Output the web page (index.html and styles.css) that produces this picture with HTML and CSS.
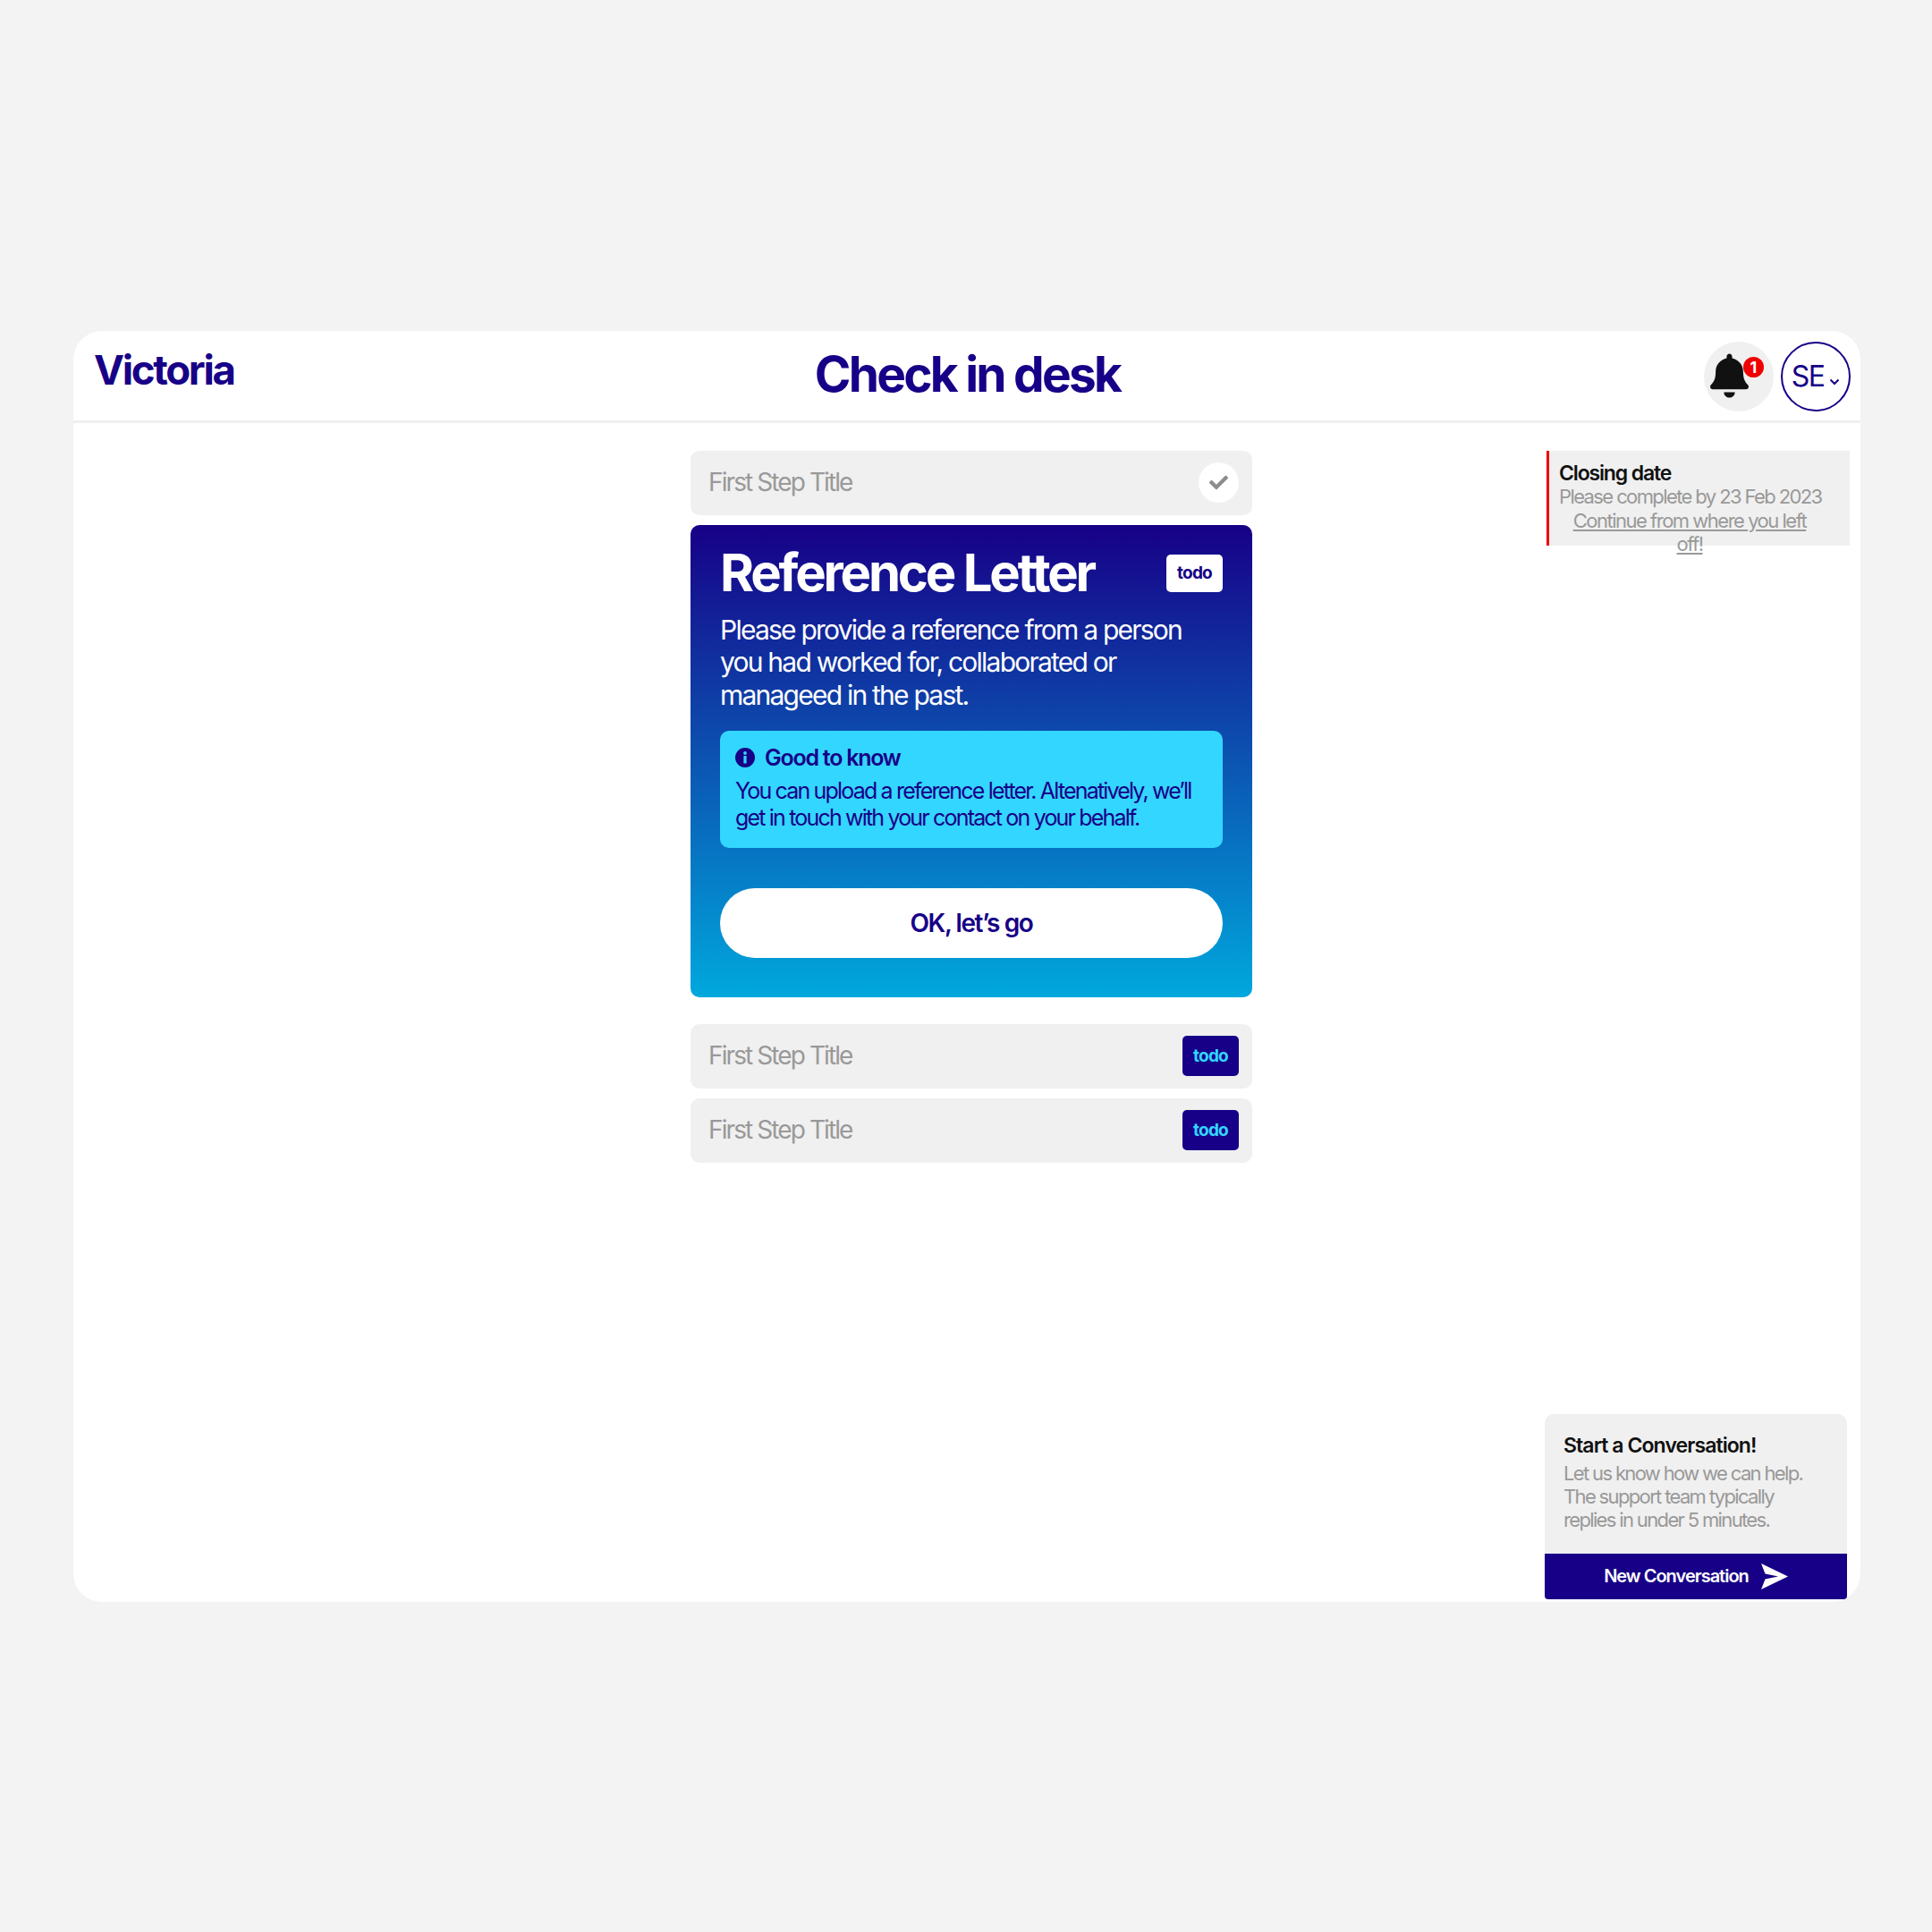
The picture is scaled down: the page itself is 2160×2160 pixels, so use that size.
FILE: index.html
```html
<!DOCTYPE html>
<html lang="en">
<head>
    <meta charset="UTF-8">
    <meta name="viewport" content="width=device-width, initial-scale=1.0">
    <title>Check in desk</title>
    <link rel="stylesheet" href="styles.css">
</head>
<body>

<div class="app-card">
    <header class="top-bar">
        <div class="logo">Victoria</div>
        <h1 class="page-title">Check in desk</h1>
        <div class="top-actions">
            <button class="bell-button" aria-label="Notifications">
                <svg class="bell-icon" viewBox="0 0 448 512"><path d="M224 512c35.32 0 63.97-28.65 63.97-64H160.03c0 35.35 28.65 64 63.97 64zm215.39-149.71c-19.32-20.76-55.47-51.99-55.47-154.29 0-77.7-54.48-139.9-127.94-155.16V32c0-17.67-14.32-32-31.98-32s-31.98 14.33-31.98 32v20.84C118.56 68.1 64.08 130.3 64.08 208c0 102.3-36.15 133.53-55.47 154.29-6 6.45-8.66 14.16-8.61 21.71.11 16.4 12.98 32 32.1 32h383.8c19.12 0 32-15.6 32.1-32 .05-7.55-2.61-15.27-8.61-21.71z"/></svg>
                <span class="bell-badge">1</span>
            </button>
            <button class="user-button">SE<svg class="chevron" viewBox="0 0 12 8"><path d="M1.5 1.5 6 6l4.500-4.500"/></svg></button>
        </div>
    </header>

    <div class="content">
        <main class="steps">
            <div class="step">
                <span class="step-title">First Step Title</span>
                <span class="step-done">
                    <svg viewBox="0 0 512 512"><path d="M173.898 439.404l-166.4-166.4c-9.997-9.997-9.997-26.206 0-36.204l36.203-36.204c9.997-9.998 26.207-9.998 36.204 0L192 312.69 432.095 72.596c9.997-9.997 26.207-9.997 36.204 0l36.203 36.204c9.997 9.997 9.997 26.206 0 36.204l-294.4 294.401c-9.998 9.997-26.207 9.997-36.204-.001z"/></svg>
                </span>
            </div>

            <section class="step-active">
                <div class="step-active-head">
                    <h2>Reference Letter</h2>
                    <span class="tag tag-light">todo</span>
                </div>
                <p class="step-text">Please provide a reference from a person you had worked for, collaborated or manageed in the past.</p>
                <div class="info-box">
                    <div class="info-title">
                        <svg class="info-icon" viewBox="0 0 22 22"><circle cx="11" cy="11" r="11"/><rect class="info-mark" x="9.400" y="9" width="3.200" height="8.500"/><circle class="info-mark" cx="11" cy="6" r="1.900"/></svg>
                        Good to know
                    </div>
                    <p>You can upload a reference letter. Altenatively, we’ll get in touch with your contact on your behalf.</p>
                </div>
                <button class="go-button">OK, let’s go</button>
            </section>

            <div class="step step-next">
                <span class="step-title">First Step Title</span>
                <span class="tag tag-dark">todo</span>
            </div>
            <div class="step">
                <span class="step-title">First Step Title</span>
                <span class="tag tag-dark">todo</span>
            </div>
        </main>

        <aside class="side">
            <div class="closing">
                <strong>Closing date</strong>
                <span>Please complete by 23 Feb 2023</span>
                <a href="#">Continue from where you left off!</a>
            </div>

            <div class="chat">
                <div class="chat-body">
                    <h3>Start a Conversation!</h3>
                    <p>Let us know how we can help. The support team typically replies in under 5 minutes.</p>
                </div>
                <button class="chat-button">
                    New Conversation
                    <svg viewBox="0 0 30 29"><path d="M0 0 30 14.500 0 29 4.500 17.500 19 14.500 4.500 11.500z"/></svg>
                </button>
            </div>
        </aside>
    </div>
</div>

</body>
</html>
```

FILE: styles.css
```css
* {
    box-sizing: border-box;
}

body {
    font-family: Inter, sans-serif;
    background-color: #f3f3f3;
    margin: 0;
    min-height: 2160px;
    display: flex;
    align-items: center;
    justify-content: center;
}

button {
    font-family: inherit;
    border: none;
    cursor: pointer;
}

.app-card {
    width: 1998px;
    height: 1421px;
    background: #fff;
    border-radius: 32px;
    display: flex;
    flex-direction: column;
    margin-left: 2px;
}

/* header */
.top-bar {
    height: 103px;
    flex: none;
    display: grid;
    grid-template-columns: 1fr auto 1fr;
    padding: 12px 11px 0 23px;
    border-bottom: 3px solid #efefef;
}

.logo {
    font-size: 45.500px;
    font-weight: 700;
    letter-spacing: -0.05em;
    line-height: 48px;
    padding-top: 8px;
    color: #170087;
}

.page-title {
    margin: 3px 11px 0 0;
    font-size: 55px;
    font-weight: 700;
    letter-spacing: -0.05em;
    line-height: 66px;
    color: #170087;
}

.top-actions {
    display: flex;
    justify-content: flex-end;
    gap: 8px;
}

.bell-button {
    position: relative;
    width: 78px;
    height: 78px;
    border-radius: 50%;
    background: #f0f0f0;
    padding: 13px 0 0 7px;
    display: flex;
    align-items: flex-start;
}

.bell-icon {
    width: 43px;
    height: 50px;
    fill: #111;
}

.bell-badge {
    position: absolute;
    top: 17px;
    left: 44px;
    width: 23px;
    height: 23px;
    border-radius: 50%;
    background: #f00000;
    color: #fff;
    font-size: 18px;
    font-weight: 700;
    line-height: 23px;
    text-align: center;
}

.user-button {
    width: 78px;
    height: 78px;
    border-radius: 50%;
    background: #fff;
    border: 2px solid #170087;
    color: #170087;
    font-size: 32px;
    letter-spacing: -0.05em;
    padding: 0;
    display: flex;
    align-items: center;
    justify-content: center;
    gap: 6px;
}

.chevron {
    width: 12px;
    height: 8px;
    margin-top: 12px;
    fill: none;
    stroke: #170087;
    stroke-width: 2;
}

/* main area */
.content {
    flex: 1;
    display: grid;
    grid-template-columns: 690px 628px 1fr;
    padding-top: 31px;
}

.steps {
    grid-column: 2;
}

.step {
    height: 72px;
    background: #f0f0f0;
    border-radius: 10px;
    display: flex;
    align-items: center;
    justify-content: space-between;
    padding: 0 15px 0 20px;
    margin-bottom: 11px;
}

.step-next {
    margin-top: 30px;
}

.step-title {
    font-size: 28px;
    letter-spacing: -0.068em;
    margin-top: -2px;
    color: #999;
}

.step-done {
    width: 45px;
    height: 45px;
    border-radius: 50%;
    background: #fff;
    display: flex;
    align-items: center;
    justify-content: center;
}

.step-done svg {
    width: 21px;
    height: 21px;
    fill: #8c8c8c;
}

.tag {
    height: 42px;
    width: 63px;
    border-radius: 5px;
    display: flex;
    align-items: center;
    justify-content: center;
    font-size: 19px;
    font-weight: 700;
    letter-spacing: -0.04em;
}

.tag-light {
    margin-top: 2px;
    background: #fff;
    color: #170087;
}

.tag-dark {
    height: 45px;
    background: #170087;
    color: #33d6ff;
}

.step-active {
    height: 528px;
    border-radius: 10px;
    padding: 34px 33px 0;
    background: linear-gradient(180deg, #170087 0%, #00a8dd 100%);
    color: #fff;
}

.step-active-head {
    display: flex;
    align-items: center;
    justify-content: space-between;
    height: 38px;
    margin-bottom: 27px;
}

.step-active-head h2 {
    margin: 0;
    font-size: 58px;
    font-weight: 700;
    letter-spacing: -0.055em;
}

.step-text {
    margin: 0 0 22px;
    font-size: 30px;
    line-height: 36.500px;
    letter-spacing: -0.059em;
}

.info-box {
    height: 131px;
    background: #33d6ff;
    border-radius: 10px;
    padding: 15px 17px;
    color: #170087;
    margin-bottom: 45px;
}

.info-title {
    display: flex;
    align-items: center;
    gap: 11px;
    font-size: 25px;
    font-weight: 600;
    letter-spacing: -0.05em;
    line-height: 30px;
    margin-bottom: 7px;
}

.info-icon {
    width: 22px;
    height: 22px;
    fill: #170087;
}

.info-mark {
    fill: #33d6ff;
}

.info-box p {
    margin: 0;
    font-size: 25px;
    line-height: 30px;
    letter-spacing: -0.073em;
}

.go-button {
    display: block;
    width: 100%;
    height: 78px;
    border-radius: 39px;
    background: #fff;
    color: #170087;
    font-size: 28px;
    font-weight: 600;
    letter-spacing: -0.05em;
}

/* right column */
.side {
    grid-column: 3;
    min-width: 0;
    display: flex;
    flex-direction: column;
    justify-content: space-between;
    padding: 0 15px 3px 0;
    margin-left: 327px;
}

.closing {
    height: 106px;
    margin-left: 2px;
    margin-right: -3px;
    background: #f0f0f0;
    border-left: 3px solid #ed0000;
    padding: 12px 33px 0 11px;
    font-size: 22px;
    line-height: 26.500px;
    letter-spacing: -0.068em;
    color: #999;
}

.closing strong {
    display: block;
    font-size: 23px;
    font-weight: 600;
    letter-spacing: -0.05em;
    color: #111;
}

.closing span {
    display: block;
    white-space: nowrap;
    letter-spacing: -0.073em;
}

.closing a {
    display: block;
    text-align: center;
    color: #999;
}

.chat {
    height: 207px;
    background: #f0f0f0;
    border-radius: 10px 10px 4px 4px;
    display: flex;
    flex-direction: column;
    justify-content: space-between;
    overflow: hidden;
}

.chat-body {
    padding: 22px 30px 0 21px;
}

.chat-body h3 {
    margin: 0 0 5px;
    font-size: 23px;
    font-weight: 600;
    line-height: 26px;
    letter-spacing: -0.04em;
    color: #111;
}

.chat-body p {
    margin: 0;
    font-size: 22px;
    line-height: 26px;
    letter-spacing: -0.075em;
    color: #999;
}

.chat-button {
    height: 51px;
    background: #170087;
    color: #fff;
    font-size: 20px;
    font-weight: 600;
    letter-spacing: -0.05em;
    display: flex;
    align-items: center;
    justify-content: center;
    gap: 14px;
}

.chat-button svg {
    width: 30px;
    height: 29px;
    fill: #fff;
}
```
